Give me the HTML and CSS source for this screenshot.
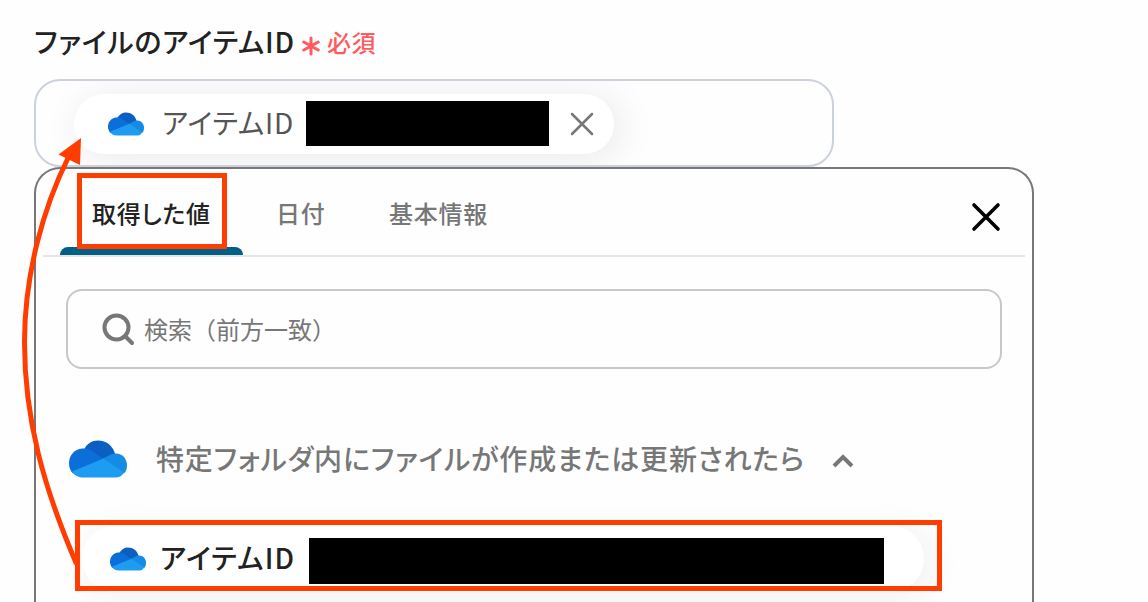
FILE: index.html
```
<!DOCTYPE html>
<html lang="ja">
<head>
  <meta charset="UTF-8" />
  <meta name="viewport" content="width=device-width, initial-scale=1.0"/>
  <title>ファイルのアイテムID</title>
  <link rel="stylesheet" href="styles.css">
</head>
<body>
  <svg class="defs" width="0" height="0">
    <symbol id="cloud" viewBox="0 0 58 38">
      <path fill="#0a5fc0" d="M15 9.500C18 3.500 23 .5 29 .5c8.500 0 14.500 5 17 13.200L36 22 14 15z"/>
      <path fill="#0a6fd9" d="M13 8.600c4-.6 7 .2 10 2.200L36 20 4 33.500C1.500 31 0 27 0 23.500 0 15.500 5.500 9.200 13 8.600z"/>
      <path fill="#148be4" d="M34 18.500L42 14.500c2-.8 3.500-1 5-1 6.500 0 11 5.500 11 12 0 3-1 6-3 8L32 22z"/>
      <path fill="#1e9cf2" d="M3 31.500L34.500 18.500 55 32.500c-2 4-5.500 5-9 5H14c-5 0-9-2.500-11-6z"/>
    </symbol>
  </svg>

  <div class="label">
    <span class="label-text">ファイルのアイテムID</span>
    <svg class="asterisk" viewBox="0 0 18 20"><path d="M9 2v16M1.800 6l14.400 8M16.200 6L1.800 14"/></svg>
    <span class="required">必須</span>
  </div>

  <div class="field">
    <div class="chip">
      <svg class="cloud"><use href="#cloud"/></svg>
      <span class="chip-text">アイテムID</span>
      <div class="mask"></div>
      <svg class="remove" viewBox="0 0 24 24"><path d="M2 2l20 20M22 2L2 22"/></svg>
    </div>
  </div>

  <div class="panel">
    <div class="tabs">
      <div class="tab active">取得した値</div>
      <div class="tab date">日付</div>
      <div class="tab info">基本情報</div>
      <svg class="close" viewBox="0 0 30 30"><path d="M3 3l24 24M27 3L3 27"/></svg>
    </div>

    <div class="search">
      <svg class="search-icon" viewBox="0 0 34 34"><circle cx="14.500" cy="15.500" r="12"/><path d="M23.500 24.500l6.500 6.500"/></svg>
      <span class="placeholder">検索（前方一致）</span>
    </div>

    <div class="group">
      <svg class="cloud-big"><use href="#cloud"/></svg>
      <span class="group-text">特定フォルダ内にファイルが作成または更新されたら</span>
      <svg class="chevron" viewBox="0 0 22 14"><path d="M2 12l9-9 9 9"/></svg>
    </div>

    <div class="item">
      <svg class="cloud"><use href="#cloud"/></svg>
      <span class="item-text">アイテムID</span>
      <div class="mask wide"></div>
    </div>
  </div>

  <!-- Highlights over the form -->
  <div class="highlight highlight-tab"></div>
  <div class="highlight highlight-item"></div>
  <svg class="arrow" viewBox="0 0 120 602">
    <path class="arrow-line" d="M76.500 564C44 488 24.500 420 24.500 342C24.500 275 43 208 69 156"/>
    <path class="arrow-head" d="M81 138L58.500 154.500 80 165z"/>
  </svg>
</body>
</html>
```
FILE: styles.css
```
* {
  box-sizing: border-box;
}

body {
  margin: 0;
  height: 602px;
  position: relative;
  overflow: hidden;
  padding: 0 34px;
  background: #fefefe;
  color: #222;
  font-family: "Noto Sans CJK JP", sans-serif;
  font-feature-settings: "palt";
  white-space: nowrap;
}

svg {
  display: block;
  flex: none;
  fill: none;
  stroke-linecap: round;
}

.defs {
  position: absolute;
}

.label {
  height: 79px;
  padding-top: 5px;
  display: flex;
  align-items: center;
}

.label-text {
  width: 268px;
  padding-bottom: 3px;
  font-size: 28px;
  font-weight: 500;
  letter-spacing: 0.03em;
}

.asterisk {
  width: 18px;
  height: 20px;
  margin-top: 7px;
  stroke: #ff5a5f;
  stroke-width: 3;
}

.required {
  margin-left: 7px;
  padding-bottom: 2px;
  font-size: 24px;
  font-weight: 500;
  letter-spacing: 0.02em;
  color: #ff5a5f;
}

.field {
  width: 800px;
  height: 88px;
  padding: 13px 38px;
  border: 2px solid #ccd1de;
  border-radius: 26px;
  overflow: hidden;
}

.chip {
  width: 540px;
  height: 60px;
  padding: 0 0 1px 34px;
  display: flex;
  align-items: center;
  border-radius: 30px;
  background: #fff;
  box-shadow: 6px 4px 36px rgba(60, 40, 70, 0.1);
}

.cloud {
  width: 36px;
  height: 24px;
}

.chip-text {
  width: 144px;
  margin-left: 18px;
  padding-bottom: 3px;
  font-size: 28px;
  letter-spacing: 0.03em;
  color: #555;
}

.mask {
  width: 243px;
  height: 45px;
  background: #000;
}

.remove {
  width: 24px;
  height: 24px;
  margin: 1px 0 0 21px;
  stroke: #777;
  stroke-width: 2.5;
}

.panel {
  width: 1000px;
  height: 435px;
  border: 2px solid #777;
  border-bottom: none;
  border-radius: 26px 26px 0 0;
  overflow: hidden;
}

.tabs {
  height: 88px;
  margin: 0 7px;
  padding-left: 17px;
  display: flex;
  border-bottom: 2px solid #e5e5e5;
}

.tab {
  padding-left: 32px;
  line-height: 88px;
  font-size: 24px;
  font-weight: 500;
  letter-spacing: 0.03em;
  color: #777;
}

.tab.active {
  width: 183px;
  color: #222;
  position: relative;
}

.tab.active::after {
  content: "";
  position: absolute;
  left: 0;
  bottom: 0;
  width: 183px;
  height: 8px;
  border-radius: 8px 8px 0 0;
  background: #045f85;
}

.tab.date {
  width: 114px;
  padding-left: 33px;
}

.tab.info {
  width: 190px;
}

.close {
  width: 30px;
  height: 30px;
  margin: 33px 24px 0 auto;
  stroke: #000;
  stroke-width: 3.6;
}

.search {
  height: 80px;
  width: 936px;
  margin: 32px 0 0 30px;
  padding-left: 34px;
  display: flex;
  align-items: center;
  border: 2px solid #c9c7ca;
  border-radius: 16px;
  font-size: 24px;
  font-feature-settings: normal;
  color: #777;
}

.search-icon {
  width: 34px;
  height: 34px;
  margin-right: 8px;
  stroke: #777;
  stroke-width: 4;
}

.placeholder {
  padding-bottom: 2px;
}

.group {
  height: 60px;
  margin: 60px 0 0 33px;
  display: flex;
  align-items: center;
  color: #777;
}

.cloud-big {
  width: 58px;
  height: 38px;
}

.group-text {
  width: 676px;
  margin-left: 29px;
  padding-bottom: 3px;
  font-size: 28px;
  font-weight: 500;
  letter-spacing: 0.03em;
}

.chevron {
  width: 22px;
  height: 14px;
  margin-top: 4px;
  stroke: #777;
  stroke-width: 4;
  stroke-linecap: butt;
}

.item {
  width: 842px;
  height: 66px;
  margin: 37px 0 0 46px;
  padding-left: 28px;
  display: flex;
  align-items: center;
  border-radius: 33px;
  background: #fff;
  box-shadow: 6px 6px 36px rgba(60, 40, 70, 0.07);
}

.item-text {
  width: 149px;
  margin-left: 14px;
  padding-bottom: 4px;
  font-size: 28px;
  font-weight: 500;
  letter-spacing: 0.045em;
}

.mask.wide {
  width: 575px;
  height: 46px;
  margin-top: 4px;
}

.highlight {
  position: absolute;
  border: 5px solid #ff3d00;
}

.highlight-tab {
  left: 77px;
  top: 173px;
  width: 150px;
  height: 76px;
}

.highlight-item {
  left: 75px;
  top: 520px;
  width: 867px;
  height: 71px;
}

.arrow {
  position: absolute;
  left: 0;
  top: 0;
  width: 120px;
  height: 602px;
}

.arrow-line {
  stroke: #ff3d00;
  stroke-width: 5;
  stroke-linecap: butt;
}

.arrow-head {
  fill: #ff3d00;
}
```
